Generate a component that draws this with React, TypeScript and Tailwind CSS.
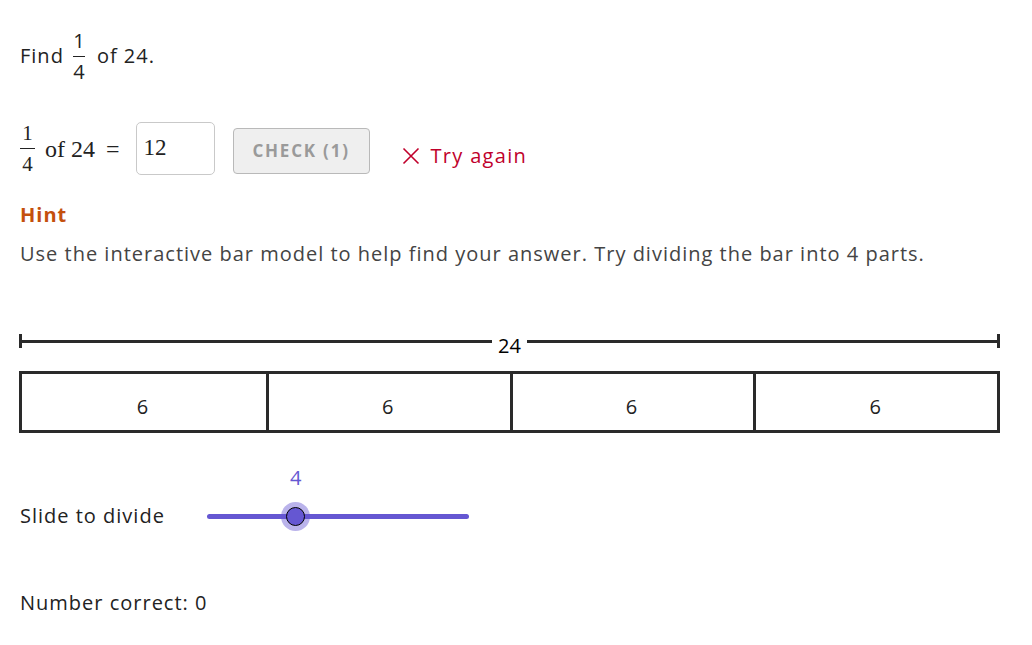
import React from "react";

const sans = "font-['Open_Sans','Lato',sans-serif]";
const serif = "font-['Liberation_Serif','DejaVu_Serif',serif]";

function Frac({ num, den, className }: { num: string; den: string; className?: string }) {
  return (
    <span className={`inline-flex flex-col items-center ${className ?? ""}`}>
      <span className="leading-[20px]">{num}</span>
      <span className="w-full h-[1px] bg-[#222] my-[5px]" />
      <span className="leading-[20px]">{den}</span>
    </span>
  );
}

export default function App() {
  const parts = [6, 6, 6, 6];

  return (
    <div className={`${sans} tracking-[1px] text-[#222] pl-[20px] pr-[32px] bg-white min-h-[645px]`}>
      {/* question */}
      <div className="mt-[29px] h-[54px] flex items-center text-[20px]">
        <span>Find</span>
        <Frac num="1" den="4" className="ml-[9px] mr-[12px] w-[12px] tracking-normal text-[20px]" />
        <span>of 24.</span>
      </div>

      {/* answer row */}
      <div className="mt-[39px] h-[53px] flex items-start">
        <div className={`${serif} tracking-normal h-[53px] flex items-center text-[24px]`}>
          <Frac num="1" den="4" className="text-[21px] w-[15px] mr-[10px]" />
          <span>of</span>
          <span className="ml-[6px]">24</span>
          <span className="ml-[11px]">=</span>
        </div>
        <div className={`${serif} tracking-normal ml-[16px] w-[79px] h-[53px] border border-[#c9c9c9] rounded-[5px] flex items-center pl-[7px] text-[23px]`}>
          12
        </div>
        <button className={`${sans} ml-[18px] mt-[6px] w-[137px] h-[46px] bg-[#efefef] border border-[#b9b9b9] rounded-[4px] text-[#9a9a9a] font-bold text-[17px] tracking-[1.8px]`}>
          CHECK (1)
        </button>
        <div className="ml-[32px] mt-[22px] flex items-center text-[#c0002b] text-[20px] leading-[24px]">
          <svg width="18" height="18" viewBox="0 0 18 18" className="mr-[11px]">
            <path d="M1.5 1.5 L16.5 16.5 M16.5 1.5 L1.5 16.5" stroke="#c0002b" strokeWidth="1.6" fill="none" />
          </svg>
          <span className="tracking-[1.3px]">Try again</span>
        </div>
      </div>

      {/* hint */}
      <div className="mt-[28px] leading-[24px] text-[20px] font-bold text-[#c4500d]">Hint</div>
      <div className="mt-[15px] leading-[24px] text-[20px] text-[#444]">
        Use the interactive bar model to help find your answer. Try dividing the bar into 4 parts.
      </div>

      {/* bar model */}
      <div className="mt-[63px] -ml-[1px] h-[24px] flex items-center">
        <div className="w-[3px] h-[14px] bg-[#2a2a2a]" />
        <div className="flex-1 h-[3px] bg-[#2a2a2a]" />
        <span className="mx-[6px] pt-[9px] text-[20px] tracking-normal text-black leading-[20px]">24</span>
        <div className="flex-1 h-[3px] bg-[#2a2a2a]" />
        <div className="w-[3px] h-[14px] bg-[#2a2a2a]" />
      </div>
      <div className="mt-[18px] -ml-[1px] h-[62px] border-[3px] border-[#2a2a2a] grid grid-cols-4">
        {parts.map((p, i) => (
          <div
            key={i}
            className={`flex items-center justify-center pt-[9px] pr-[3px] text-[20px] tracking-normal text-[#222] ${i > 0 ? "border-l-[3px] border-[#2a2a2a]" : ""}`}
          >
            {p}
          </div>
        ))}
      </div>

      {/* slider */}
      <div className="mt-[69px] h-[28px] flex items-center">
        <span className="w-[187px] text-[20px] leading-[24px]">Slide to divide</span>
        <div className="relative w-[262px] h-[5px] rounded-full bg-[#6557d2]">
          <div className="absolute left-[74px] -top-[12px] w-[29px] h-[29px] rounded-full bg-[#6557d2]/45" />
          <div className="absolute left-[79px] -top-[7px] w-[19px] h-[19px] rounded-full bg-[#6557d2] border-[1.5px] border-black" />
          <span className="absolute left-[83px] -top-[48px] text-[20px] leading-[24px] tracking-normal text-[#6557d2]">4</span>
        </div>
      </div>

      <div className="mt-[61px] leading-[24px] text-[20px]">Number correct: 0</div>
    </div>
  );
}
